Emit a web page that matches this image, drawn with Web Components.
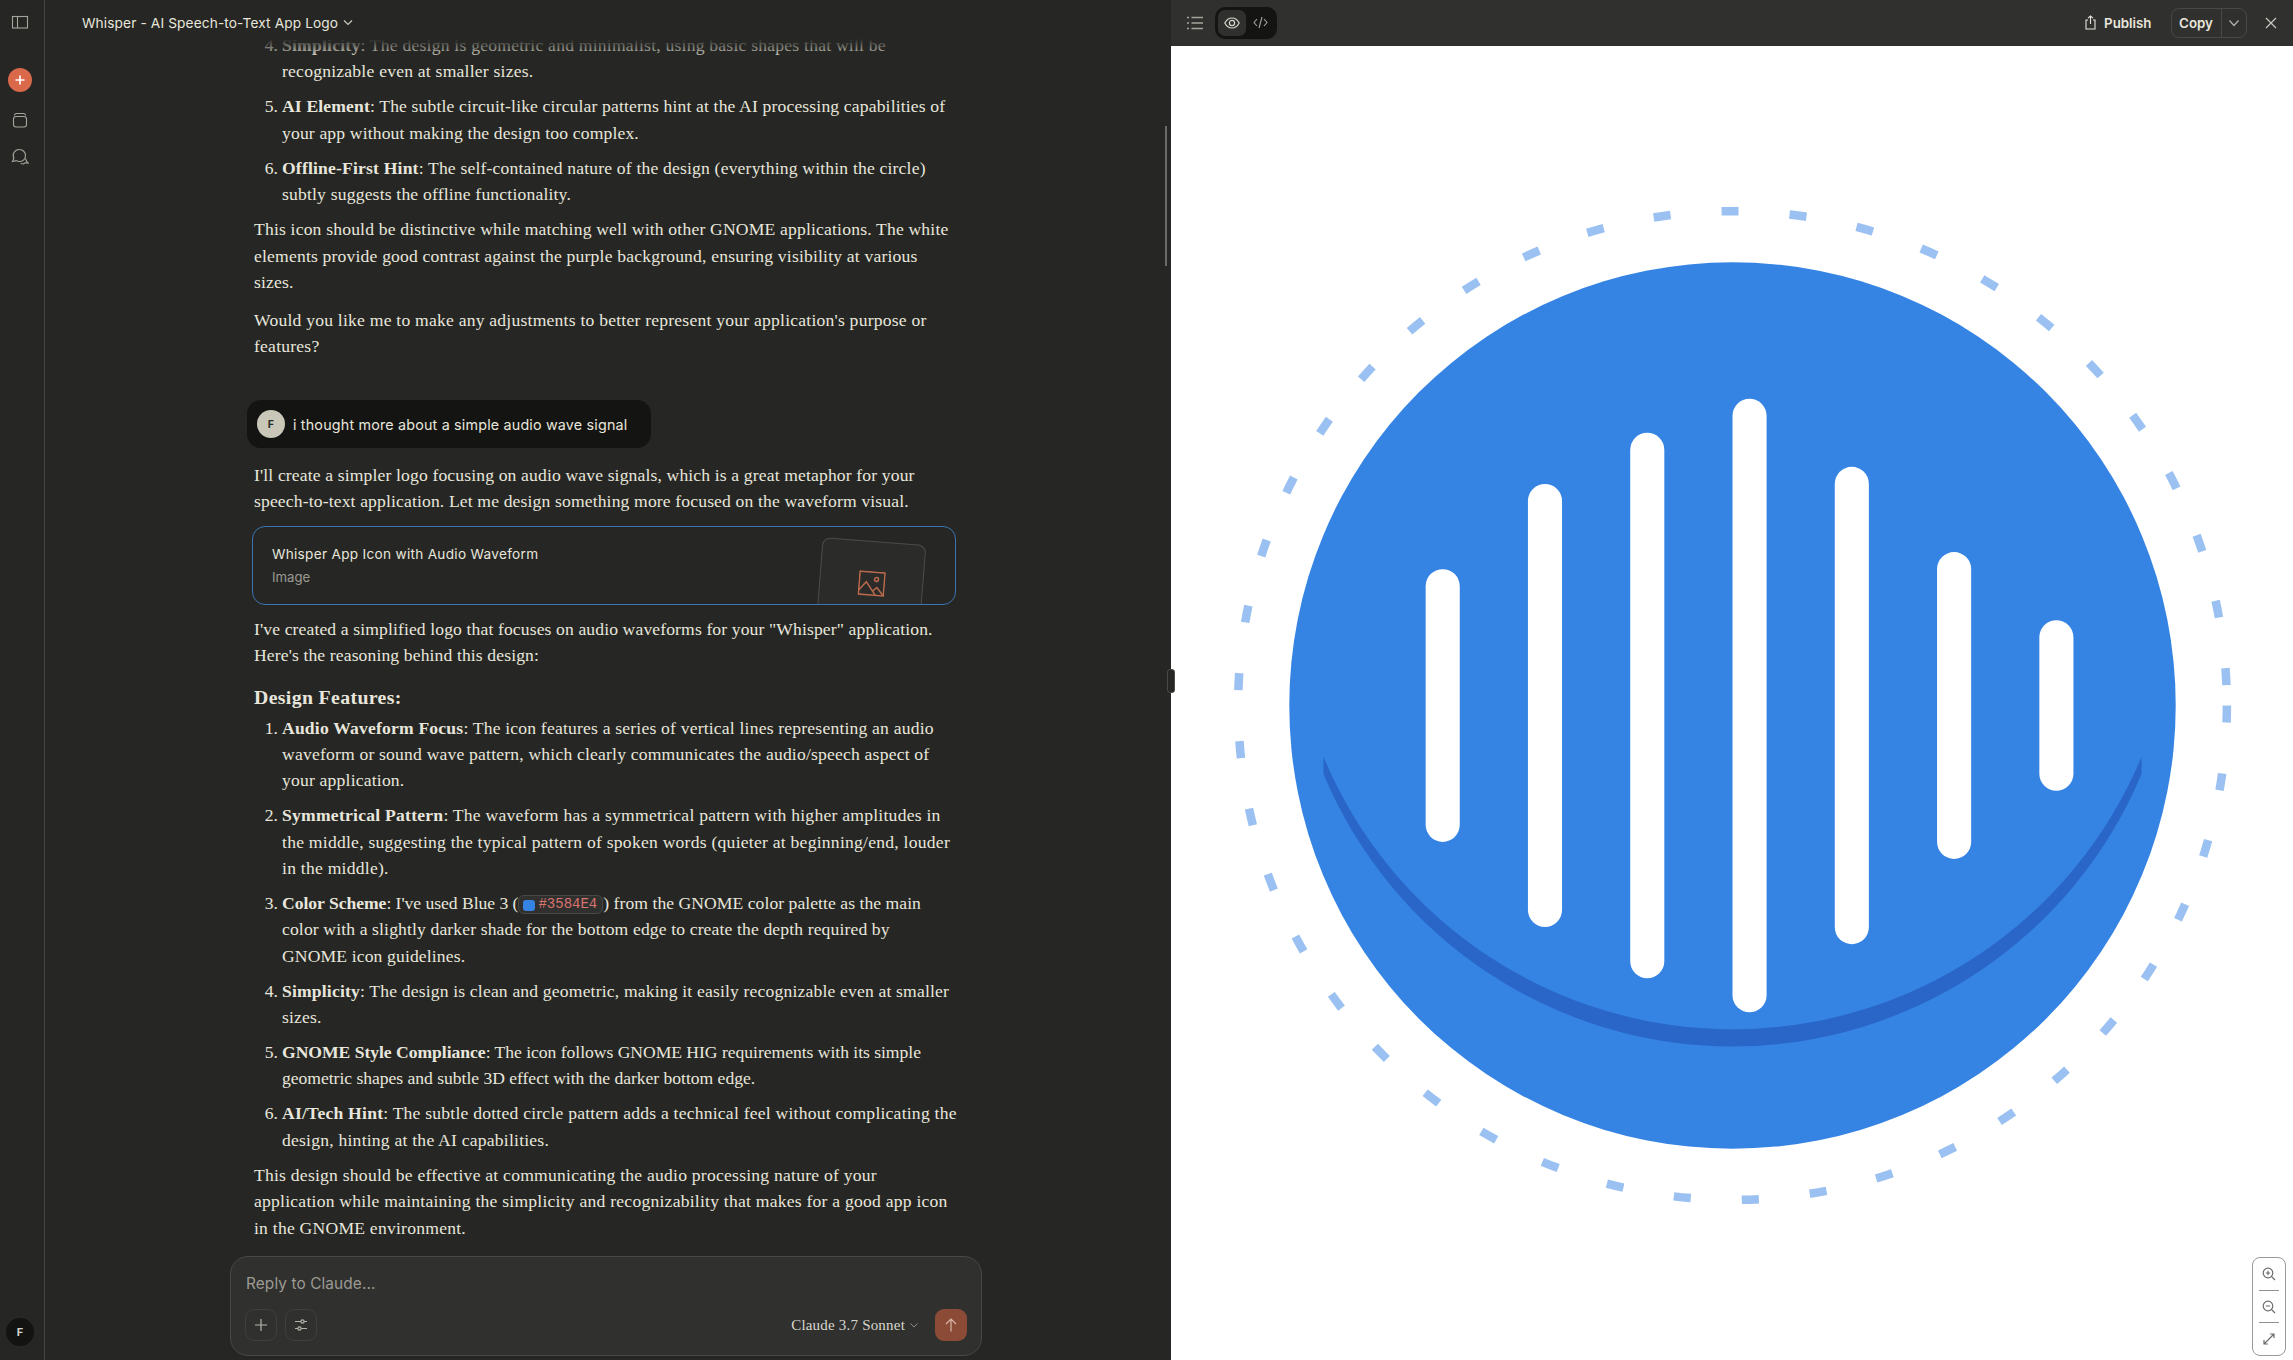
<!DOCTYPE html>
<html lang="en">
<head>
<meta charset="utf-8">
<title>Whisper - AI Speech-to-Text App Logo</title>
<style>
    html, body { margin: 0; height: 100%; background: #262624; overflow: hidden; }
    body { font-family: "Liberation Serif", serif; color: #e8e6dc; }
</style>
</head>
<body>
<claude-app>
    <side-rail slot="rail"></side-rail>
    <chat-column slot="chat">
        <prose-li n="4" track=".22">
            <b>Simplicity</b>: The design is geometric and minimalist, using basic shapes that will be<br>
            recognizable even at smaller sizes.
        </prose-li>
        <prose-li n="5" gap track=".15">
            <b>AI Element</b>: The subtle circuit-like circular patterns hint at the AI processing capabilities of<br>
            your app without making the design too complex.
        </prose-li>
        <prose-li n="6" gap track=".18">
            <b>Offline-First Hint</b>: The self-contained nature of the design (everything within the circle)<br>
            subtly suggests the offline functionality.
        </prose-li>
        <prose-p space="9" track=".18">
            This icon should be distinctive while matching well with other GNOME applications. The white<br>
            elements provide good contrast against the purple background, ensuring visibility at various<br>
            sizes.
        </prose-p>
        <prose-p space="11" track=".22">
            Would you like me to make any adjustments to better represent your application's purpose or<br>
            features?
        </prose-p>
        <user-bubble>i thought more about a simple audio wave signal</user-bubble>
        <prose-p space="14" track=".14">
            I'll create a simpler logo focusing on audio wave signals, which is a great metaphor for your<br>
            speech-to-text application. Let me design something more focused on the waveform visual.
        </prose-p>
        <artifact-card>
            <span slot="name">Whisper App Icon with Audio Waveform</span>
            <span slot="kind">Image</span>
        </artifact-card>
        <prose-p space="11" track=".12">
            I've created a simplified logo that focuses on audio waveforms for your "Whisper" application.<br>
            Here's the reasoning behind this design:
        </prose-p>
        <prose-h>Design Features:</prose-h>
        <prose-li n="1" track=".19">
            <b>Audio Waveform Focus</b>: The icon features a series of vertical lines representing an audio<br>
            waveform or sound wave pattern, which clearly communicates the audio/speech aspect of<br>
            your application.
        </prose-li>
        <prose-li n="2" gap track=".24">
            <b>Symmetrical Pattern</b>: The waveform has a symmetrical pattern with higher amplitudes in<br>
            the middle, suggesting the typical pattern of spoken words (quieter at beginning/end, louder<br>
            in the middle).
        </prose-li>
        <prose-li n="3" gap track=".13">
            <span style="letter-spacing:-.03px"><b>Color Scheme</b>: I've used Blue 3 (</span><color-chip>#3584E4</color-chip><span style="letter-spacing:.05px">) from the GNOME color palette as the main</span><br>
            color with a slightly darker shade for the bottom edge to create the depth required by<br>
            GNOME icon guidelines.
        </prose-li>
        <prose-li n="4" gap track=".17">
            <b>Simplicity</b>: The design is clean and geometric, making it easily recognizable even at smaller<br>
            sizes.
        </prose-li>
        <prose-li n="5" gap track="-.03">
            <b>GNOME Style Compliance</b>: The icon follows GNOME HIG requirements with its simple<br>
            geometric shapes and subtle 3D effect with the darker bottom edge.
        </prose-li>
        <prose-li n="6" gap track=".22">
            <b>AI/Tech Hint</b>: The subtle dotted circle pattern adds a technical feel without complicating the<br>
            design, hinting at the AI capabilities.
        </prose-li>
        <prose-p space="8.5" track=".23">
            This design should be effective at communicating the audio processing nature of your<br>
            application while maintaining the simplicity and recognizability that makes for a good app icon<br>
            in the GNOME environment.
        </prose-p>
    </chat-column>
    <artifact-panel slot="panel"></artifact-panel>
</claude-app>

<script>
const UI_FONT = '"Inter", "Liberation Sans", sans-serif';

class ClaudeApp extends HTMLElement {
    connectedCallback() {
        this.attachShadow({ mode: 'open' });
        this.shadowRoot.innerHTML = `
            <style>
                :host { display: grid; grid-template-columns: 45px 1126px 1122px; height: 1360px; position: relative; overflow: hidden; }
                .handle { position: absolute; left: 1167px; top: 669px; width: 6px; height: 22px; background: #262624; border: 1px solid #4a4a47; border-radius: 3px; }
            </style>
            <slot name="rail"></slot>
            <slot name="chat"></slot>
            <slot name="panel"></slot>
            <div class="handle"></div>
        `;
    }
}

class SideRail extends HTMLElement {
    connectedCallback() {
        this.attachShadow({ mode: 'open' });
        this.shadowRoot.innerHTML = `
            <style>
                :host { display: flex; flex-direction: column; align-items: center; height: 1360px; box-sizing: border-box; border-right: 1px solid #454543; padding: 14px 4px 14px 0; color: #a5a49c; }
                svg { display: block; fill: none; stroke: currentColor; stroke-width: 1.1; }
                .new { width: 24px; height: 24px; border-radius: 50%; background: #d9694a; display: flex; align-items: center; justify-content: center; margin: 38px 0 19px; }
                .new svg { stroke: #fff; stroke-width: 1.6; }
                .search { margin-top: 19px; }
                .me { margin-top: auto; width: 28px; height: 28px; border-radius: 50%; background: #131312; color: #d5d4cc; font: 700 11px ${UI_FONT}; display: flex; align-items: center; justify-content: center; }
            </style>
            <svg width="18" height="16" viewBox="0 0 18 16"><rect x="1.5" y="2.5" width="15" height="11.5"/><path d="M6.5 2.5v11.5"/></svg>
            <div class="new"><svg width="12" height="12" viewBox="0 0 12 12"><path d="M6 1.5v9M1.5 6h9"/></svg></div>
            <svg width="18" height="18" viewBox="0 0 18 18"><path d="M3.5 4.5c0-1.2.8-2 2-2h7c1.2 0 2 .8 2 2"/><rect x="2.5" y="5.5" width="13" height="10.5" rx="2.5"/></svg>
            <svg class="search" width="18" height="18" viewBox="0 0 18 18"><path d="M8.5 1.5a6 6 0 0 1 6 6c0 3.4-2.7 6-6 6-1.2 0-2.3-.3-3.2-.9L1.5 13.5l1.4-3.2a6 6 0 0 1 5.6-8.8z"/><path d="M14.5 10.5l1 2.7 1.5 1.8-2.7-.3-2 1.3-2.6-.5"/></svg>
            <div class="me">F</div>
        `;
    }
}

class ChatColumn extends HTMLElement {
    connectedCallback() {
        this.attachShadow({ mode: 'open' });
        this.shadowRoot.innerHTML = `
            <style>
                :host { display: block; position: relative; height: 1360px; overflow: hidden; }
                header { position: absolute; inset: 0 0 auto 0; height: 58px; background: linear-gradient(#262624 0, #262624 39px, rgba(38,38,36,0) 58px); box-sizing: border-box; padding: 14px 0 0 37px; display: flex; align-items: flex-start; gap: 4px; font: 400 13.7px/18px ${UI_FONT}; letter-spacing: .12px; color: #e8e6dc; }
                header svg { margin-top: 3px; }
                .scroll { box-sizing: border-box; height: 1360px; padding: 32px 0 0 209px; }
                .bar { position: absolute; right: 4px; top: 126px; width: 2px; height: 140px; background: #6b6b68; }
                composer-box { position: absolute; left: 185px; bottom: 4px; }
            </style>
            <div class="scroll"><slot></slot></div>
            <header>Whisper - AI Speech-to-Text App Logo
                <svg width="12" height="12" viewBox="0 0 12 12" fill="none" stroke="#c8c7bf" stroke-width="1.2"><path d="M2 3.5l4 4 4-4"/></svg>
            </header>
            <div class="bar"></div>
            <composer-box></composer-box>
        `;
    }
}

class ProseP extends HTMLElement {
    connectedCallback() {
        this.attachShadow({ mode: 'open' });
        const space = this.getAttribute('space') || 0;
        const track = this.getAttribute('track') || 0;
        this.shadowRoot.innerHTML = `
            <style>
                :host { display: block; margin-top: ${space}px; font-size: 17.6px; line-height: 26.4px; letter-spacing: ${track}px; white-space: nowrap; }
            </style>
            <slot></slot>
        `;
    }
}

class ProseH extends HTMLElement {
    connectedCallback() {
        this.attachShadow({ mode: 'open' });
        this.shadowRoot.innerHTML = `
            <style>
                :host { display: block; margin: 14.5px 0 3.5px; font-size: 19.8px; line-height: 28px; font-weight: 700; letter-spacing: .36px; white-space: nowrap; }
            </style>
            <slot></slot>
        `;
    }
}

class ProseLi extends HTMLElement {
    connectedCallback() {
        this.attachShadow({ mode: 'open' });
        const track = this.getAttribute('track') || 0;
        this.shadowRoot.innerHTML = `
            <style>
                :host { display: flex; font-size: 17.6px; line-height: 26.4px; letter-spacing: ${track}px; white-space: nowrap; }
                :host([gap]) { margin-top: 8.5px; }
                .n { width: 24px; margin-right: 4px; text-align: right; flex: none; letter-spacing: 0; }
            </style>
            <div class="n">${this.getAttribute('n')}.</div>
            <div><slot></slot></div>
        `;
    }
}

class ColorChip extends HTMLElement {
    connectedCallback() {
        this.attachShadow({ mode: 'open' });
        this.shadowRoot.innerHTML = `
            <style>
                :host { display: inline-flex; align-items: center; gap: 3px; height: 19px; box-sizing: border-box; padding: 0 5px 0 4px; background: #30302e; border: 1px solid #484846; border-radius: 6px; vertical-align: -2px; font: 14px/14px "Liberation Mono", monospace; letter-spacing: 0; color: #d9746f; }
                i { width: 12px; height: 11px; margin-top: 2px; border-radius: 3px; background: #3584e4; }
                span { position: relative; top: -1px; }
            </style>
            <i></i><span><slot></slot></span>
        `;
    }
}

class UserBubble extends HTMLElement {
    connectedCallback() {
        this.attachShadow({ mode: 'open' });
        this.shadowRoot.innerHTML = `
            <style>
                :host { display: flex; align-items: center; gap: 8px; box-sizing: border-box; width: 404px; height: 48px; margin: 40.5px 0 0 -7px; padding: 1px 10px 0; background: #141413; border-radius: 14px; font: 400 14.3px ${UI_FONT}; letter-spacing: .19px; color: #e8e6dc; white-space: nowrap; }
                .av { width: 28px; height: 28px; border-radius: 50%; background: #c8c7b8; color: #2a2a28; font: 700 10.5px ${UI_FONT}; display: flex; align-items: center; justify-content: center; flex: none; }
            </style>
            <div class="av">F</div>
            <slot></slot>
        `;
    }
}

class ArtifactCard extends HTMLElement {
    connectedCallback() {
        this.attachShadow({ mode: 'open' });
        this.shadowRoot.innerHTML = `
            <style>
                :host { display: block; position: relative; overflow: hidden; box-sizing: border-box; width: 704px; height: 79px; margin: 11px 0 0 -2px; padding: 17px 0 0 19px; background: #262624; border: 1px solid #3b74b4; border-radius: 13px; font-family: ${UI_FONT}; }
                .name { font-size: 13.6px; line-height: 20px; letter-spacing: .3px; color: #e8e6dc; }
                .kind { font-size: 13.2px; line-height: 20px; margin-top: 3px; color: #9c9b93; }
                .thumb { position: absolute; left: 566px; top: 14px; width: 104px; height: 90px; box-sizing: border-box; background: #2b2b29; border: 1px solid #4c4c49; border-radius: 8px; transform: rotate(4.5deg); display: flex; justify-content: center; padding-top: 29px; }
                svg { display: block; }
            </style>
            <div class="name"><slot name="name"></slot></div>
            <div class="kind"><slot name="kind"></slot></div>
            <div class="thumb">
                <svg width="27" height="26" viewBox="0 0 27 26" fill="none" stroke="#b9694c" stroke-width="1.5">
                    <rect x="1" y="1" width="25" height="23"/>
                    <path d="M1 20l7-9 10 13M15 20l4-4 7 8"/>
                    <circle cx="18" cy="8" r="2"/>
                </svg>
            </div>
        `;
    }
}

class ComposerBox extends HTMLElement {
    connectedCallback() {
        this.attachShadow({ mode: 'open' });
        this.shadowRoot.innerHTML = `
            <style>
                :host { display: flex; flex-direction: column; box-sizing: border-box; width: 752px; height: 100px; padding: 17px 14px 14px 14px; background: #30302e; border: 1px solid #484846; border-radius: 18px; }
                .ph { font: 400 15.4px/20px ${UI_FONT}; letter-spacing: .1px; color: #9c9b93; margin-left: 1px; }
                .row { display: flex; align-items: center; gap: 8px; margin-top: auto; }
                .btn { width: 32px; height: 32px; box-sizing: border-box; border: 1px solid #3f3f3c; border-radius: 9px; display: flex; align-items: center; justify-content: center; color: #b5b4ac; }
                .btn svg { display: block; fill: none; stroke: currentColor; stroke-width: 1.2; }
                .model { margin-left: auto; display: flex; align-items: center; gap: 4px; font: 15px "Liberation Serif", serif; letter-spacing: .2px; color: #d8d7cf; margin-right: 8px; }
                .send { background: #8b4b37; border: 0; color: #d9b7a8; }
            </style>
            <div class="ph">Reply to Claude...</div>
            <div class="row">
                <div class="btn"><svg width="14" height="14" viewBox="0 0 14 14"><path d="M7 1v12M1 7h12"/></svg></div>
                <div class="btn"><svg width="14" height="14" viewBox="0 0 14 14"><path d="M1 3.5h6M10 3.5h3M1 10.5h3M7 10.5h6"/><circle cx="8.5" cy="3.5" r="1.6"/><circle cx="5.5" cy="10.5" r="1.6"/></svg></div>
                <div class="model">Claude 3.7 Sonnet
                    <svg width="10" height="10" viewBox="0 0 10 10" fill="none" stroke="#8e8d85"><path d="M1.5 3.5l3.5 3.5 3.5-3.5"/></svg>
                </div>
                <div class="btn send"><svg width="14" height="16" viewBox="0 0 14 16"><path d="M7 14.5V2M2 7l5-5 5 5"/></svg></div>
            </div>
        `;
    }
}

class ArtifactPanel extends HTMLElement {
    connectedCallback() {
        this.attachShadow({ mode: 'open' });
        this.shadowRoot.innerHTML = `
            <style>
                :host { display: flex; flex-direction: column; height: 1360px; background: #fff; position: relative; font-family: ${UI_FONT}; }
                .top { display: flex; align-items: center; flex: none; height: 45.5px; box-sizing: border-box; padding: 0 16.5px 0 16px; background: #30302e; color: #e8e6dc; }
                svg { display: block; fill: none; stroke: currentColor; }
                .list { color: #a5a49c; margin-right: 12px; }
                .seg { display: flex; align-items: center; height: 32px; width: 62px; box-sizing: border-box; padding: 0 3px; background: #141413; border-radius: 10px; }
                .eye { width: 28px; height: 26px; background: #30302e; border-radius: 7px; display: flex; align-items: center; justify-content: center; color: #d8d7cf; }
                .code { width: 28px; display: flex; justify-content: center; color: #a5a49c; }
                .pub { margin-left: auto; display: flex; align-items: center; gap: 8px; font-size: 13.3px; font-weight: 600; margin-right: 19px; }
                .copy { display: flex; align-items: center; width: 76px; height: 30px; box-sizing: border-box; border: 1px solid #484846; border-radius: 8px; font-size: 13.3px; font-weight: 600; }
                .copy span { width: 49px; text-align: center; border-right: 1px solid #484846; line-height: 28px; }
                .copy div { flex: 1; display: flex; justify-content: center; color: #b5b4ac; }
                .x { margin-left: 18px; color: #c8c7bf; }
                .stage { flex: 1; display: flex; align-items: center; justify-content: center; padding-top: 5px; }
                zoom-controls { position: absolute; right: 7px; bottom: 4px; }
            </style>
            <div class="top">
                <svg class="list" width="16" height="14" viewBox="0 0 16 14" stroke-width="1.3"><path d="M0 1.5h2M0 7h2M0 12.5h2M4.5 1.5H16M4.5 7H16M4.5 12.5H16"/></svg>
                <div class="seg">
                    <div class="eye"><svg width="16" height="12" viewBox="0 0 16 12" stroke-width="1.2"><path d="M.8 6C2.5 2.8 5 1 8 1s5.500 1.800 7.200 5C13.500 9.200 11 11 8 11S2.500 9.200.8 6z"/><circle cx="8" cy="6" r="2.600"/></svg></div>
                    <div class="code"><svg width="15" height="13" viewBox="0 0 15 13" stroke-width="1.100"><path d="M4 3L1 6.500 4 10M11 3l3 3.500L11 10M9 1L6 12"/></svg></div>
                </div>
                <div class="pub">
                    <svg width="11" height="15" viewBox="0 0 11 15" stroke-width="1.100"><path d="M3 5H1v9h9V5H8M5.500 9V1M3 3.200L5.500 1 8 3.200"/></svg>
                    Publish
                </div>
                <div class="copy"><span>Copy</span><div><svg width="12" height="10" viewBox="0 0 12 10" stroke-width="1.200"><path d="M1.500 2.500L6 7.500l4.500-5"/></svg></div></div>
                <svg class="x" width="12" height="12" viewBox="0 0 12 12" stroke-width="1.200"><path d="M1 1l10 10M11 1L1 11"/></svg>
            </div>
            <div class="stage"><whisper-logo></whisper-logo></div>
            <zoom-controls></zoom-controls>
        `;
    }
}

class WhisperLogo extends HTMLElement {
    connectedCallback() {
        this.attachShadow({ mode: 'open' });
        // x offset and half height of each wave bar, in the icon's own units
        const bars = [[-34, 16], [-22, 26], [-10, 32], [2, 36], [14, 28], [26, 18], [38, 10]]
            .map(([x, h]) => `<rect x="${x - 2}" y="${-h}" width="4" height="${h * 2}" rx="2" fill="#fff"/>`)
            .join('');
        this.shadowRoot.innerHTML = `
            <style>
                :host { display: block; width: 1091px; height: 1091px; }
                svg { display: block; width: 100%; height: 100%; }
            </style>
            <svg viewBox="-64 -64 128 128">
                <circle r="58" fill="none" stroke="#3584e4" stroke-opacity=".5" stroke-width="1" stroke-dasharray="2 6"/>
                <circle r="52" fill="#3584e4"/>
                <path d="M-48 6A52 52 0 0 0 48 6V8A52 52 0 0 1 -48 8Z" fill="#2a66c8"/>
                ${bars}
            </svg>
        `;
    }
}

class ZoomControls extends HTMLElement {
    connectedCallback() {
        this.attachShadow({ mode: 'open' });
        this.shadowRoot.innerHTML = `
            <style>
                :host { display: flex; flex-direction: column; align-items: center; width: 34px; height: 99px; box-sizing: border-box; background: #fff; border: 1px solid #9a9a9a; border-radius: 8px; color: #6c6c6c; }
                div { flex: 1; display: flex; align-items: center; justify-content: center; }
                hr { width: 20px; margin: 0; border: 0; border-top: 1px solid #8f8f8f; }
                svg { display: block; fill: none; stroke: currentColor; stroke-width: 1.200; }
            </style>
            <div><svg width="14" height="14" viewBox="0 0 14 14"><circle cx="6" cy="6" r="4.800"/><path d="M9.500 9.500L13 13M6 3.800v4.400M3.800 6h4.400"/></svg></div>
            <hr>
            <div><svg width="14" height="14" viewBox="0 0 14 14"><circle cx="6" cy="6" r="4.800"/><path d="M9.500 9.500L13 13M3.800 6h4.400"/></svg></div>
            <hr>
            <div><svg width="14" height="14" viewBox="0 0 14 14"><path d="M2 12L12 2M8 2h4v4M2 8v4h4"/></svg></div>
        `;
    }
}

customElements.define('claude-app', ClaudeApp);
customElements.define('side-rail', SideRail);
customElements.define('chat-column', ChatColumn);
customElements.define('prose-p', ProseP);
customElements.define('prose-h', ProseH);
customElements.define('prose-li', ProseLi);
customElements.define('color-chip', ColorChip);
customElements.define('user-bubble', UserBubble);
customElements.define('artifact-card', ArtifactCard);
customElements.define('composer-box', ComposerBox);
customElements.define('artifact-panel', ArtifactPanel);
customElements.define('whisper-logo', WhisperLogo);
customElements.define('zoom-controls', ZoomControls);
</script>
</body>
</html>
